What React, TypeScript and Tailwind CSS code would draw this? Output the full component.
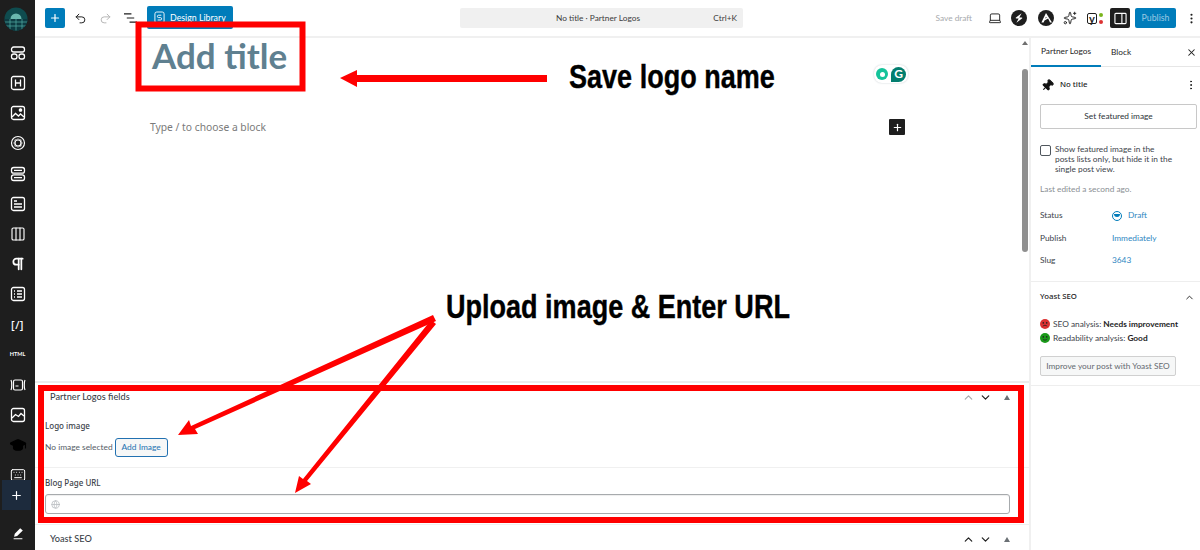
import React from "react";
import { Plus, Undo2, Redo2, Laptop, X, MoreVertical, ChevronUp, ChevronDown, Pin, Columns3, Pilcrow, Sparkles, GraduationCap, Keyboard, Globe } from "lucide-react";

function Rail() {
  const I = "w-[16px] h-[16px]";
  const items: React.ReactNode[] = [
    <svg key="a" viewBox="0 0 16 16" className={I} fill="none" stroke="currentColor" strokeWidth="1.3"><rect x="1.5" y="2" width="13" height="5" rx="2.2" /><rect x="1.5" y="9" width="5.5" height="5" rx="2.2" /><rect x="9" y="9" width="5.5" height="5" rx="2.2" /></svg>,
    <svg key="b" viewBox="0 0 16 16" className={I} fill="none" stroke="currentColor" strokeWidth="1.3"><rect x="1.5" y="1.5" width="13" height="13" rx="2" /><path d="M5.5 4.5v7M10.5 4.5v7M5.5 8h5" /></svg>,
    <svg key="c" viewBox="0 0 16 16" className={I} fill="none" stroke="currentColor" strokeWidth="1.3"><rect x="1.5" y="1.5" width="13" height="13" rx="2" /><path d="M2 12l3.5-3.5 3 2.5 2-2 3.5 3" /><circle cx="10.5" cy="5" r="1.2" fill="currentColor" /></svg>,
    <svg key="d" viewBox="0 0 16 16" className={I} fill="none" stroke="currentColor" strokeWidth="1.2"><circle cx="8" cy="8" r="6.5" /><circle cx="8" cy="8" r="3" /><path d="M8 3.6l1.2 1.2h1.9v1.9L12.4 8l-1.3 1.3v1.9H9.2L8 12.4l-1.2-1.2H4.9V9.3L3.6 8l1.3-1.3V4.8h1.9z" strokeWidth="0.7" /></svg>,
    <svg key="e" viewBox="0 0 16 16" className={I} fill="none" stroke="currentColor" strokeWidth="1.3"><rect x="1.5" y="1.5" width="13" height="5.6" rx="2.2" /><rect x="1.5" y="8.9" width="13" height="5.6" rx="2.2" /><path d="M4 4.3h8M4 11.7h8" /></svg>,
    <svg key="f" viewBox="0 0 16 16" className={I} fill="none" stroke="currentColor" strokeWidth="1.3"><rect x="1.5" y="1.5" width="13" height="13" rx="2" /><path d="M4 5h3M4 8h8M4 11h8" /></svg>,
    <Columns3 key="g" className={I} strokeWidth={1.7} />,
    <Pilcrow key="h" className={I} strokeWidth={2.6} />,
    <svg key="i" viewBox="0 0 16 16" className={I} fill="none" stroke="currentColor" strokeWidth="1.3"><rect x="1.5" y="1.5" width="13" height="13" rx="2" /><path d="M4 5h1M7 5h5M4 8h1M7 8h5M4 11h1M7 11h5" /></svg>,
    <span key="j" className="text-[11px] font-medium leading-none tracking-[0.5px] text-white font-['Noto_Sans',sans-serif]">[/]</span>,
    <span key="k" className="text-[5.5px] font-bold leading-none">HTML</span>,
    <svg key="l" viewBox="0 0 16 16" className={I} fill="none" stroke="currentColor" strokeWidth="1.2"><rect x="3.5" y="3" width="9" height="10" rx="1.5" /><path d="M1 3c1 2 1 8 0 10M15 3c-1 2-1 8 0 10M5.5 9h3" /></svg>,
    <svg key="m" viewBox="0 0 16 16" className={I} fill="none" stroke="currentColor" strokeWidth="1.3"><rect x="1.5" y="1.5" width="13" height="13" rx="2" /><path d="M2 11l3.5-3.5 3 2 2.5-3 3 2.5" /></svg>,
    <GraduationCap key="n" className="w-[18px] h-[18px] text-black" fill="black" strokeWidth={1.5} />,
    <Keyboard key="o" className={I} strokeWidth={1.5} />,
  ];
  return (
    <aside className="w-[35px] shrink-0 h-[550px] bg-[#1e1e1e] flex flex-col text-white">
      <div className="h-[480px] overflow-hidden">
        <div className="h-[38px] flex items-center justify-center">
          <svg viewBox="0 0 24 24" className="w-[24px] h-[24px] ml-[-3px]">
            <defs>
              <clipPath id="globe"><circle cx="12" cy="12" r="11.5" /></clipPath>
            </defs>
            <g clipPath="url(#globe)">
              <rect width="24" height="24" fill="#0f4c4f" />
              <circle cx="12" cy="12" r="5.5" fill="#69b7ae" />
              <rect y="12" width="24" height="12" fill="#0d3b42" />
              <path d="M0 15h24M0 19h24M6 12v12M12 12v12M18 12v12" stroke="#4da39d" strokeWidth="0.8" />
            </g>
          </svg>
        </div>
        <div className="flex flex-col">
          {items.map((it, i) => (
            <div key={i} className="h-[30.15px] flex items-center justify-center">{it}</div>
          ))}
        </div>
      </div>
      <div className="h-[30px] w-[29px] ml-[2px] bg-[#1d2b3d] flex items-center justify-center">
        <Plus className="w-[13px] h-[13px]" strokeWidth={2.2} />
      </div>
      <div className="flex-1 flex items-center justify-center pt-[6px]">
        <svg viewBox="0 0 16 16" className="w-[14px] h-[14px]" fill="white"><path d="M10.5 2.5l3 2.5-6.5 6.5-3.5.8.8-3.5zM3 14h10v1H3z" /></svg>
      </div>
    </aside>
  );
}

function TopBar() {
  return (
    <header className="h-[38px] shrink-0 border-b-2 border-[#f0f0f0] flex items-center bg-white text-[8.3px] text-[#1e1e1e]">
      <div className="w-[10px]" />
      <div className="w-[20px] h-[20px] bg-[#007cba] rounded-[2px] flex items-center justify-center text-white">
        <Plus className="w-[12px] h-[12px]" strokeWidth={2.4} />
      </div>
      <Undo2 className="w-[13px] h-[13px] ml-[9px]" strokeWidth={1.8} />
      <Redo2 className="w-[13px] h-[13px] ml-[12px] text-[#b5b5b5]" strokeWidth={1.8} />
      <svg viewBox="0 0 14 12" className="w-[13px] h-[12px] ml-[12px]" stroke="#1e1e1e" strokeWidth="1.3"><path d="M0 1.5h8M3 6h8M6 10.5h8" /></svg>
      <div className="w-[86px] h-[23px] bg-[#007cba] rounded-[2px] ml-[10px] mt-[-1px] flex items-center pl-[7px] gap-[5px] text-white">
        <svg viewBox="0 0 12 14" className="w-[11px] h-[13px]" fill="none" stroke="white" strokeWidth="1"><rect x="1" y="1" width="10" height="12" rx="2" /><path d="M8 4.5H5a1.2 1.2 0 000 2.6h2a1.2 1.2 0 010 2.6H4" /></svg>
        <span className="text-[8.8px]">Design Library</span>
      </div>
      <div className="w-[227px]" />
      <div className="w-[283px] h-[20px] bg-[#f0f0f0] rounded-[2px] relative flex items-center justify-center text-[#3c3c3c] pr-[7px]">
        <span>No title · Partner Logos</span>
        <span className="absolute right-[6px]">Ctrl+K</span>
      </div>
      <div className="flex-1" />
      <span className="text-[#a7aaad]">Save draft</span>
      <Laptop className="w-[14px] h-[14px] ml-[16px]" strokeWidth={1.6} />
      <div className="w-[16px] h-[16px] rounded-full bg-[#1e1e1e] ml-[9px] flex items-center justify-center">
        <svg viewBox="0 0 16 16" className="w-[16px] h-[16px]" fill="white"><path d="M10.6 3.2L5 7.4c-.6.5-.3 1 .3 1h2.4l-2.3 4.4 5.6-4.2c.6-.5.3-1-.3-1H8.3z" /></svg>
      </div>
      <div className="w-[16px] h-[16px] rounded-full bg-[#1e1e1e] ml-[11px] flex items-center justify-center">
        <svg viewBox="0 0 16 16" className="w-[16px] h-[16px]" fill="white"><path d="M8 3L3.4 12.5h2.2l.9-2 3.6-2 1 2 .9 2h2zM7.2 8.6L8 6.8l.7 1z" /></svg>
      </div>
      <Sparkles className="w-[14px] h-[14px] ml-[9px]" strokeWidth={1.6} />
      <div className="ml-[10px] w-[16px] h-[14px] relative flex items-center">
        <span className="text-[11px] font-bold leading-none border border-[#1e1e1e] rounded-[2px] px-[1px] h-[11px] flex items-center">y</span>
        <span className="absolute right-0 top-[2px] w-[4px] h-[4px] rounded-full bg-[#7ab51d]" />
        <span className="absolute right-0 bottom-[1px] w-[4px] h-[4px] rounded-full bg-[#dc3232]" />
      </div>
      <div className="w-[20px] h-[20px] bg-[#1e1e1e] rounded-[2px] ml-[7px] flex items-center justify-center">
        <svg viewBox="0 0 14 14" className="w-[13px] h-[13px]" fill="none" stroke="white" strokeWidth="1.2"><rect x="1" y="1.5" width="12" height="11" rx="1" /><path d="M8.5 1.5v11" /></svg>
      </div>
      <div className="w-[41px] h-[20px] bg-[#007cba] rounded-[2px] ml-[5px] flex items-center justify-center text-[#9ac9e3] text-[8.8px]">Publish</div>
      <MoreVertical className="w-[13px] h-[13px] ml-[9px]" strokeWidth={2} />
      <div className="w-[2px]" />
    </header>
  );
}

function SectionArrows({ upMuted }: { upMuted?: boolean }) {
  return (
    <div className="flex items-center">
      <ChevronUp className={`w-[13px] h-[13px] ${upMuted ? "text-[#a7aaad]" : "text-[#1e1e1e]"}`} strokeWidth={2.2} />
      <ChevronDown className="w-[13px] h-[13px] ml-[4px] text-[#1e1e1e]" strokeWidth={2.2} />
      <span className="ml-[12px] w-0 h-0 border-x-[3.5px] border-x-transparent border-b-[5px] border-b-[#6b7075]" />
    </div>
  );
}

function Editor() {
  return (
    <main className="flex-1 min-w-0 flex flex-col text-[8.4px] text-[#3c434a]">
      <div className="h-[343px] shrink-0 relative pl-[117px] pr-[124px]">
        <h1 className="text-[35px] leading-[36px] font-bold text-[#5f8090] mt-[-1px] font-['Lato',sans-serif]">Add title</h1>
        <div className="flex justify-between items-center mt-[47px]">
          <span className="text-[10.3px] text-[#7a7a7a] ml-[-2px] font-['Noto_Sans',sans-serif]">Type / to choose a block</span>
          <div className="w-[16px] h-[16px] bg-[#1e1e1e] rounded-[1px] flex items-center justify-center text-white mt-[-1px]">
            <Plus className="w-[11px] h-[11px]" strokeWidth={2.6} />
          </div>
        </div>
        <div className="absolute left-[839px] top-[27px] w-[34px] h-[18px] bg-white rounded-[8px] shadow-[0_0_2px_#c7ccd1] flex items-center justify-center gap-[3px]">
          <span className="w-[12px] h-[12px] rounded-full bg-[#15c39a] flex items-center justify-center"><span className="w-[5px] h-[5px] rounded-full bg-white" /></span>
          <span className="w-[15px] h-[15px] rounded-full rounded-bl-[2px] bg-[#027e6f] text-white text-[12px] font-bold flex items-center justify-center leading-none">G</span>
        </div>
        <div className="absolute right-[1px] top-[3px] w-[7px] h-[213px] flex flex-col items-center">
          <span className="w-0 h-0 border-x-[3px] border-x-transparent border-b-[4px] border-b-[#6f6f6f]" />
          <span className="w-[6px] h-[183px] mt-[24px] rounded-[3px] bg-[#8f8f8f]" />
        </div>
      </div>
      <section className="flex-1 min-h-0 border-t-2 border-[#ececec] flex flex-col">
        <div className="h-[26px] shrink-0 pl-[15px] pr-[19px] pt-[2px] flex items-center justify-between">
          <span className="text-[9.2px] font-medium text-[#3c434a]">Partner Logos fields</span>
          <SectionArrows upMuted />
        </div>
        <div className="pl-[10px] pt-[11px] h-[58px] shrink-0">
          <div className="font-medium text-[8px] leading-[12px] font-['Noto_Sans',sans-serif]">Logo image</div>
          <div className="flex items-center mt-[6px]">
            <span className="text-[#555d66]">No image selected</span>
            <span className="ml-[2px] w-[53px] h-[19px] border border-[#2271b1] rounded-[3px] bg-[#f6f7f7] flex items-center justify-center text-[#2271b1]">Add Image</span>
          </div>
        </div>
        <div className="border-t border-[#f0f0f0] pl-[10px] pr-[19px] pt-[9px] h-[57px] shrink-0">
          <div className="font-medium text-[8px] leading-[12px] font-['Noto_Sans',sans-serif]">Blog Page URL</div>
          <div className="mt-[5px] h-[20px] border border-[#a7aaad] rounded-[3px] flex items-center pl-[5px] shadow-[inset_0_1px_1px_#eee]">
            <Globe className="w-[9px] h-[9px] text-[#b5b9bd]" strokeWidth={2} />
          </div>
        </div>
        <div className="border-t border-[#f0f0f0] flex-1 pl-[15px] pr-[19px] flex items-center justify-between pt-[3px]">
          <span className="text-[9.2px] font-medium text-[#3c434a]">Yoast SEO</span>
          <SectionArrows />
        </div>
      </section>
    </main>
  );
}

function Face({ color, smile }: { color: string; smile: boolean }) {
  return (
    <svg viewBox="0 0 10 10" className="w-[10px] h-[10px] shrink-0">
      <circle cx="5" cy="5" r="5" fill={color} />
      <circle cx="3.3" cy="3.9" r="0.8" fill="#222" />
      <circle cx="6.7" cy="3.9" r="0.8" fill="#222" />
      <path d={smile ? "M2.8 6c.8 1.5 3.6 1.5 4.4 0" : "M2.8 7.4c.8-1.5 3.6-1.5 4.4 0"} fill="none" stroke="#222" strokeWidth="0.8" />
    </svg>
  );
}

function Sidebar() {
  return (
    <aside className="w-[171px] shrink-0 border-l-2 border-[#f0f0f0] text-[8.3px] text-[#3c434a] flex flex-col">
      <div className="h-[29px] shrink-0 border-b border-[#e6e6e6] flex items-stretch relative">
        <div className="w-[70px] border-b-2 border-[#007cba] mb-[-1px] flex items-center justify-center text-[#1e1e1e]">Partner Logos</div>
        <div className="ml-[10px] flex items-center text-[#1e1e1e]">Block</div>
        <X className="absolute right-[3px] top-[9px] w-[11px] h-[11px] text-[#1e1e1e]" strokeWidth={2.2} />
      </div>
      <div className="pl-[9px] pr-[3px] pt-[10px] h-[215px] shrink-0 border-b border-[#eeeeee]">
        <div className="flex items-center h-[16px]">
          <Pin className="w-[13px] h-[13px] rotate-45 text-[#111] ml-[1px]" fill="#111" strokeWidth={2} />
          <span className="ml-[6px] font-medium text-[7.8px] text-[#1e1e1e] font-['Noto_Sans',sans-serif]">No title</span>
          <MoreVertical className="ml-auto mr-[0px] w-[12px] h-[12px] text-[#1e1e1e]" strokeWidth={2} />
        </div>
        <div className="mt-[11px] h-[25px] border border-[#c8c8c8] rounded-[2px] flex items-center justify-center text-[#2c3338]">Set featured image</div>
        <div className="mt-[15px] flex items-start">
          <span className="mt-[1px] w-[11px] h-[11px] border border-[#50575e] rounded-[2px] shrink-0" />
          <span className="ml-[4px] leading-[10px] w-[118px]">Show featured image in the posts lists only, but hide it in the single post view.</span>
        </div>
        <div className="mt-[10px] text-[#8a8f94] leading-[11px]">Last edited a second ago.</div>
        <div className="mt-[15px] grid grid-cols-[72px_1fr] gap-y-[11.5px] leading-[11px]">
          <span>Status</span>
          <span className="flex items-center text-[#2e86c1]">
            <span className="w-[10px] h-[10px] rounded-full border border-[#007cba] flex items-center justify-center mr-[6px]"><span className="w-[6px] h-[3px] rounded-b-[3px] bg-[#007cba]" /></span>
            Draft
          </span>
          <span>Publish</span>
          <span className="text-[#2e86c1]">Immediately</span>
          <span>Slug</span>
          <span className="text-[#2e86c1]">3643</span>
        </div>
      </div>
      <div className="pl-[9px] pr-[3px] h-[104px] shrink-0 border-b border-[#eeeeee]">
        <div className="h-[30px] flex items-center justify-between">
          <span className="font-medium text-[7.8px] text-[#1e1e1e] font-['Noto_Sans',sans-serif]">Yoast SEO</span>
          <ChevronUp className="w-[11px] h-[11px] text-[#1e1e1e] mr-[2px]" strokeWidth={2} />
        </div>
        <div className="mt-[5px] flex items-center gap-[3px] h-[14px]">
          <Face color="#dc3232" smile={false} />
          <span className="whitespace-nowrap">SEO analysis: <b className="font-bold text-[#1e1e1e]">Needs improvement</b></span>
        </div>
        <div className="flex items-center gap-[3px] h-[14px]">
          <Face color="#1a9a1a" smile />
          <span className="whitespace-nowrap">Readability analysis: <b className="font-bold text-[#1e1e1e]">Good</b></span>
        </div>
        <div className="mt-[11px] w-[136px] h-[20px] border border-[#d0d0d0] bg-[#f6f7f7] rounded-[2px] flex items-center justify-center text-[#646970] whitespace-nowrap">Improve your post with Yoast SEO</div>
      </div>
    </aside>
  );
}

function Annotations() {
  const RED = "#ff0000";
  const headline = "absolute text-black font-bold leading-none whitespace-nowrap origin-left [transform:scaleX(0.795)] font-['Liberation_Sans',sans-serif] [-webkit-text-stroke:0.4px_black]";
  return (
    <>
      <svg className="absolute inset-0 w-[1200px] h-[550px] pointer-events-none" viewBox="0 0 1200 550">
        <rect x="138.5" y="24.5" width="164" height="64" fill="none" stroke={RED} strokeWidth="6" />
        <rect x="41" y="388" width="980" height="132" fill="none" stroke={RED} strokeWidth="6" />
        <path d="M547 75H357v-5l-17 8 17 9v-5h190z" fill={RED} />
        <path d="M433 315L191 426l-2-6-11 15 20-1-3-5L436 321z" fill={RED} />
        <path d="M431 320L303 479l-4-3-4 17 16-9-4-3L436 324z" fill={RED} />
      </svg>
      <span className={`${headline} left-[569px] top-[59px] text-[34px]`}>Save logo name</span>
      <span className={`${headline} left-[446px] top-[289px] text-[34px]`}>Upload image &amp; Enter URL</span>
    </>
  );
}

export default function App() {
  return (
    <div className="relative w-[1200px] h-[550px] overflow-hidden bg-white flex font-['Lato','Noto_Sans',sans-serif]">
      <Rail />
      <div className="flex-1 min-w-0 flex flex-col">
        <TopBar />
        <div className="flex-1 min-h-0 flex">
          <Editor />
          <Sidebar />
        </div>
      </div>
      <Annotations />
    </div>
  );
}
